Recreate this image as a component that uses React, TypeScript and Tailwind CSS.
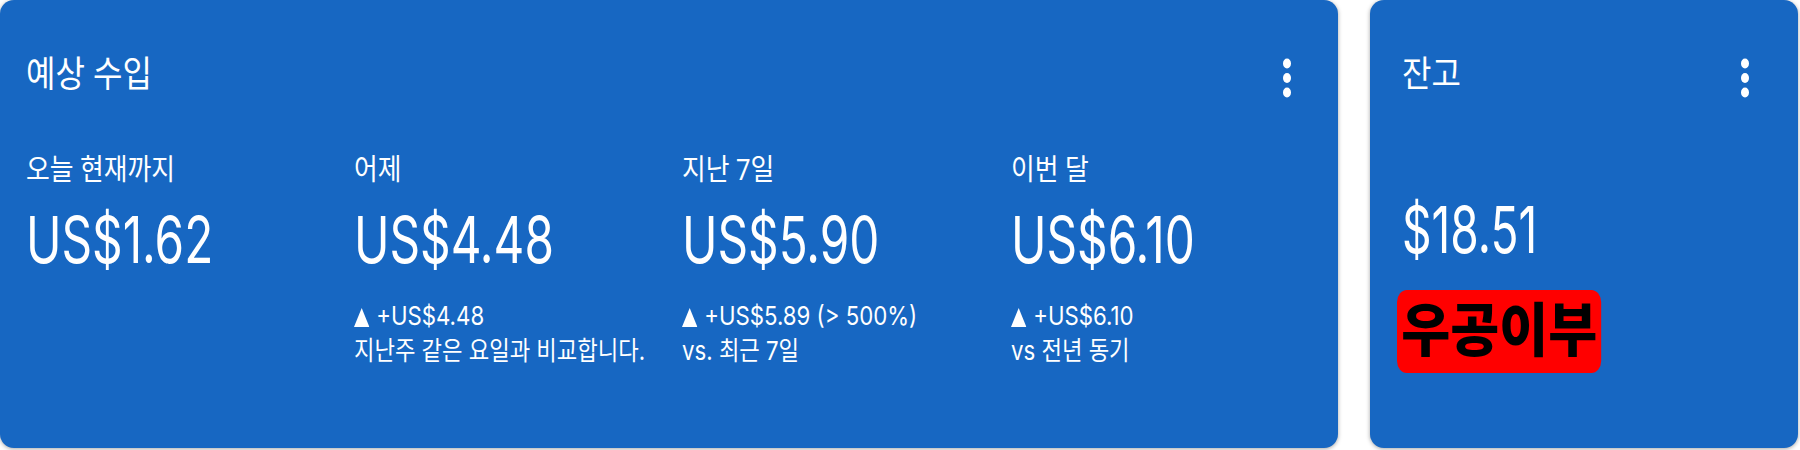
import React from "react";

const FONT = { fontFamily: 'Roboto, "Noto Sans CJK KR", sans-serif' };
const NUM_FONT = { fontFamily: 'Inter, Roboto, "Noto Sans CJK KR", sans-serif' };

type Stat = {
  label: string;
  value: string;
  delta?: string;
  note?: string;
};

const stats: Stat[] = [
  { label: "오늘 현재까지", value: "US$1.62" },
  { label: "어제", value: "US$4.48", delta: "+US$4.48", note: "지난주 같은 요일과 비교합니다." },
  { label: "지난 7일", value: "US$5.90", delta: "+US$5.89 (> 500%)", note: "vs. 최근 7일" },
  { label: "이번 달", value: "US$6.10", delta: "+US$6.10", note: "vs 전년 동기" },
];

function Kebab() {
  return (
    <svg width="8" height="40" viewBox="0 0 8 40" className="mt-[6px] shrink-0" fill="white">
      <ellipse cx="4" cy="5.5" rx="4" ry="5" />
      <ellipse cx="4" cy="20" rx="4" ry="5" />
      <ellipse cx="4" cy="34.5" rx="4" ry="5" />
    </svg>
  );
}

function StatColumn({ stat }: { stat: Stat }) {
  return (
    <div className="flex flex-col">
      <div className="block h-[40px] origin-left scale-x-[0.89] whitespace-nowrap text-[29px] leading-[40px]">
        {stat.label}
      </div>
      <div
        className="mt-[10px] block h-[80px] origin-left scale-x-[0.745] whitespace-nowrap text-[64px] leading-[80px]"
        style={NUM_FONT}
      >
        {stat.value}
      </div>
      {stat.delta && (
        <div className="mt-[18px] block origin-left scale-x-[0.855] whitespace-nowrap text-[26px] leading-[35px]" style={NUM_FONT}>
          <div>
            <svg width="18" height="19" viewBox="0 0 18 19" className="mr-[8px] inline-block" fill="white">
              <path d="M9 0 L18 19 L0 19 Z" />
            </svg>
            {stat.delta}
          </div>
          <div>{stat.note}</div>
        </div>
      )}
    </div>
  );
}

export default function App() {
  return (
    <div className="flex h-[450px] w-[1800px] gap-8 bg-white text-white" style={FONT}>
      {/* 예상 수입 */}
      <section className="flex h-[448px] w-[1338px] shrink-0 flex-col rounded-[14px] bg-[#1767c2] pl-[26px] pr-[47px] shadow-[0_1px_4px_rgba(0,0,0,0.35)]">
        <header className="flex h-[150px] items-center justify-between">
          <h2 className="block origin-left scale-x-[0.89] whitespace-nowrap text-[36px] font-normal">예상 수입</h2>
          <Kebab />
        </header>
        <div className="grid grid-cols-[328px_328px_329px_1fr]">
          {stats.map((s) => (
            <StatColumn key={s.label} stat={s} />
          ))}
        </div>
      </section>

      {/* 잔고 */}
      <section className="flex h-[448px] w-[428px] shrink-0 flex-col rounded-[14px] bg-[#1767c2] pl-[32px] pr-[49px] shadow-[0_1px_4px_rgba(0,0,0,0.35)]">
        <header className="flex h-[150px] items-center justify-between">
          <h2 className="block origin-left scale-x-[0.89] whitespace-nowrap text-[36px] font-normal">잔고</h2>
          <Kebab />
        </header>
        <div
          className="mt-[40px] block h-[80px] origin-left scale-x-[0.72] whitespace-nowrap text-[64px] leading-[80px]"
          style={NUM_FONT}
        >
          $18.51
        </div>
        <div className="-ml-[5px] mt-[20px] flex h-[83px] w-[249px] origin-left scale-x-[0.82] items-center justify-center rounded-[12px] bg-[#ff0000] text-[58px] font-black text-black">
          <span className="inline-block scale-x-[1.12] whitespace-nowrap">우공이부</span>
        </div>
      </section>
    </div>
  );
}
